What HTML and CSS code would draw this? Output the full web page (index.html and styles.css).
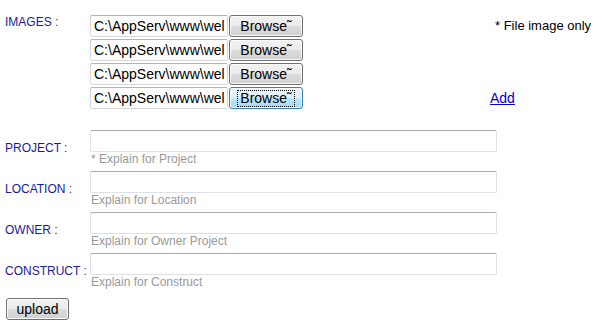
FILE: index.html
```html
<!DOCTYPE html>
<html lang="en">
  <head>
    <meta charset="UTF-8" />
    <title>Upload Project</title>
    <link rel="stylesheet" href="styles.css">
  </head>
  <body>
    <form class="upload-form">
      <div class="images-row">
        <label class="label label-top">IMAGES :</label>
        <div class="files">
          <div class="file-item">
            <input type="text" class="file-path" value="C:\AppServ\www\wel" readonly />
            <button type="button" class="browse">Browse˜</button>
          </div>
          <div class="file-item">
            <input type="text" class="file-path" value="C:\AppServ\www\wel" readonly />
            <button type="button" class="browse">Browse˜</button>
          </div>
          <div class="file-item">
            <input type="text" class="file-path" value="C:\AppServ\www\wel" readonly />
            <button type="button" class="browse">Browse˜</button>
          </div>
          <div class="file-item">
            <input type="text" class="file-path" value="C:\AppServ\www\wel" readonly />
            <button type="button" class="browse active"><span class="focus">Browse˜</span></button>
          </div>
        </div>
        <div class="side">
          <div class="note">* File image only</div>
          <a href="#" class="add-link">Add</a>
        </div>
      </div>

      <div class="field-row">
        <label class="label">PROJECT :</label>
        <div class="field">
          <input type="text" class="text-box" />
          <div class="hint">* Explain for Project</div>
        </div>
      </div>
      <div class="field-row">
        <label class="label">LOCATION :</label>
        <div class="field">
          <input type="text" class="text-box" />
          <div class="hint">Explain for Location</div>
        </div>
      </div>
      <div class="field-row">
        <label class="label">OWNER :</label>
        <div class="field">
          <input type="text" class="text-box" />
          <div class="hint">Explain for Owner Project</div>
        </div>
      </div>
      <div class="field-row">
        <label class="label">CONSTRUCT :</label>
        <div class="field">
          <input type="text" class="text-box" />
          <div class="hint">Explain for Construct</div>
        </div>
      </div>

      <button type="submit" class="win-btn upload">upload</button>
    </form>
  </body>
</html>
```

FILE: styles.css
```css
body {
  margin: 0;
  padding: 15px 0 0 5px;
  font-family: "Liberation Sans", Arial, sans-serif;
  background: #ffffff;
  color: #000000;
}
.upload-form {
  display: flex;
  flex-direction: column;
}
.label {
  width: 85px;
  flex-shrink: 0;
  font-size: 12px;
  color: #1a1a9c;
}
.label-top {
  line-height: 14px;
}
.images-row {
  display: flex;
  margin-bottom: 21px;
}
.files {
  display: flex;
  flex-direction: column;
  gap: 2px;
}
.file-item {
  display: flex;
  gap: 1px;
}
.file-path,
.text-box {
  box-sizing: border-box;
  height: 22px;
  margin: 0;
  padding: 0 4px;
  font-family: "Liberation Sans", Arial, sans-serif;
  font-size: 14px;
  color: #000;
  background: #fff;
  border: 1px solid #dde0e6;
  border-top-color: #a9abb0;
  border-radius: 2px;
  outline: none;
}
.file-path {
  width: 138px;
  padding: 0 1px 0 3px;
  border-color: #d6d6d6;
  border-top-color: #b4b4b4;
}
.browse,
.win-btn {
  box-sizing: border-box;
  height: 22px;
  margin: 0;
  padding: 0;
  font-family: "Liberation Sans", Arial, sans-serif;
  font-size: 14px;
  color: #000;
  border: 1px solid #707070;
  border-radius: 3px;
  background: linear-gradient(#f2f2f2 0%, #ebebeb 50%, #dddddd 50%, #cfcfcf 100%);
  box-shadow: inset 0 0 0 1px #fbfbfb;
  cursor: pointer;
}
.browse {
  width: 74px;
}
.browse.active {
  border-color: #3c7fb1;
  background: linear-gradient(#eaf6fd 0%, #d9f0fc 50%, #bee6fd 50%, #a7d9f5 100%);
  box-shadow: inset 0 0 0 1px #f0f9fe;
}
.focus {
  display: inline-block;
  padding: 0 2px;
  line-height: 15px;
  outline: 1px dotted #000;
}
.side {
  display: flex;
  flex-direction: column;
  justify-content: space-between;
  margin-left: 187px;
}
.note {
  padding-left: 5px;
  font-size: 13px;
  line-height: 22px;
}
.add-link {
  font-size: 14px;
  line-height: 22px;
  color: #0000cc;
}
.field-row {
  display: flex;
  align-items: center;
  margin-bottom: 5px;
}
.field {
  display: flex;
  flex-direction: column;
}
.text-box {
  width: 407px;
}
.hint {
  font-size: 12px;
  line-height: 14px;
  color: #999999;
  padding-left: 1px;
}
.upload {
  align-self: flex-start;
  width: 63px;
  margin: 4px 0 0 1px;
}
```
